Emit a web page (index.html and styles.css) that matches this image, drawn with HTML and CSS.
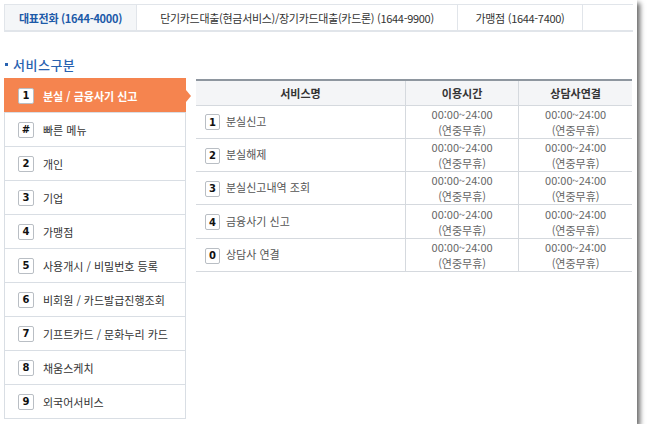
FILE: index.html
```html
<!DOCTYPE html>
<html lang="ko">
<head>
    <meta charset="UTF-8">
    <title>대표전화 서비스 안내</title>
    <link rel="stylesheet" href="styles.css">
</head>
<body>
<div class="window">
    <!-- Phone number tabs -->
    <ul class="tabs">
        <li class="tab tab-active">대표전화 (1644-4000)</li>
        <li class="tab">단기카드대출(현금서비스)/장기카드대출(카드론) (1644-9900)</li>
        <li class="tab">가맹점 (1644-7400)</li>
    </ul>

    <h2 class="section-title"><span class="dot"></span>서비스구분</h2>

    <div class="content">
        <ul class="menu">
            <li class="menu-item active"><span class="num">1</span>분실 / 금융사기 신고</li>
            <li class="menu-item"><span class="num">#</span>빠른 메뉴</li>
            <li class="menu-item"><span class="num">2</span>개인</li>
            <li class="menu-item"><span class="num">3</span>기업</li>
            <li class="menu-item"><span class="num">4</span>가맹점</li>
            <li class="menu-item"><span class="num">5</span>사용개시 / 비밀번호 등록</li>
            <li class="menu-item"><span class="num">6</span>비회원 / 카드발급진행조회</li>
            <li class="menu-item"><span class="num">7</span>기프트카드 / 문화누리 카드</li>
            <li class="menu-item"><span class="num">8</span>채움스케치</li>
            <li class="menu-item"><span class="num">9</span>외국어서비스</li>
        </ul>

        <table class="service-table">
            <thead>
            <tr>
                <th class="col-name">서비스명</th>
                <th>이용시간</th>
                <th>상담사연결</th>
            </tr>
            </thead>
            <tbody>
            <tr>
                <td class="name"><span class="num">1</span>분실신고</td>
                <td class="time">00:00~24:00<br>(연중무휴)</td>
                <td class="time">00:00~24:00<br>(연중무휴)</td>
            </tr>
            <tr>
                <td class="name"><span class="num">2</span>분실해제</td>
                <td class="time">00:00~24:00<br>(연중무휴)</td>
                <td class="time">00:00~24:00<br>(연중무휴)</td>
            </tr>
            <tr>
                <td class="name"><span class="num">3</span>분실신고내역 조회</td>
                <td class="time">00:00~24:00<br>(연중무휴)</td>
                <td class="time">00:00~24:00<br>(연중무휴)</td>
            </tr>
            <tr>
                <td class="name"><span class="num">4</span>금융사기 신고</td>
                <td class="time">00:00~24:00<br>(연중무휴)</td>
                <td class="time">00:00~24:00<br>(연중무휴)</td>
            </tr>
            <tr>
                <td class="name"><span class="num">0</span>상담사 연결</td>
                <td class="time">00:00~24:00<br>(연중무휴)</td>
                <td class="time">00:00~24:00<br>(연중무휴)</td>
            </tr>
            </tbody>
        </table>
    </div>
</div>
</body>
</html>
```

FILE: styles.css
```css
* {
    box-sizing: border-box;
    margin: 0;
    padding: 0;
}

body {
    background-color: #ffffff;
    font-family: "Noto Sans CJK KR", "Noto Sans", sans-serif;
    font-size: 11px;
    color: #333;
}

ul {
    list-style: none;
}

.window {
    width: 637px;
    height: 424px;
    background-color: #fff;
    padding: 4px 4px 0 4px;
    box-shadow: 3px 3px 5px rgba(0, 0, 0, 0.6);
}

/* Tabs */
.tabs {
    display: flex;
    height: 28px;
    border-top: 1px solid #e1e5ea;
    border-bottom: 2px solid #e1e5ea;
}

.tab {
    display: flex;
    align-items: center;
    justify-content: center;
    border-right: 1px solid #e1e5ea;
    font-size: 11px;
    letter-spacing: -0.3px;
    color: #333;
}

.tab:nth-child(1) {
    width: 133px;
    border-left: 1px solid #e1e5ea;
}

.tab:nth-child(2) {
    width: 321px;
}

.tab:nth-child(3) {
    width: 125px;
}

.tab-active {
    background-color: #f4f6f8;
    color: #1c5aa8;
    font-weight: bold;
}

/* Section heading */
.section-title {
    display: flex;
    align-items: center;
    margin-top: 23px;
    height: 18px;
    font-size: 13px;
    font-weight: 500;
    color: #2862b0;
    letter-spacing: 0.5px;
}

.dot {
    width: 3px;
    height: 3px;
    background-color: #2862b0;
    margin: 0 5px 0 1px;
}

.content {
    display: flex;
    gap: 10px;
    margin-top: 5px;
}

/* Left menu */
.menu {
    width: 182px;
    border: 1px solid #d9dee4;
    border-top: none;
    flex-shrink: 0;
}

.menu-item {
    position: relative;
    display: flex;
    align-items: center;
    height: 34px;
    padding-left: 13px;
    border-top: 1px solid #d9dee4;
    font-size: 11px;
    color: #333;
}

.menu-item .num {
    margin-right: 9px;
}

.menu-item.active {
    background-color: #f5844f;
    border-top-color: #f5844f;
    color: #fff;
    font-weight: bold;
    margin: 0 -1px;
    padding-left: 14px;
}

.menu-item.active::after {
    content: "";
    position: absolute;
    right: -5px;
    top: 11px;
    border-left: 5px solid #f5844f;
    border-top: 6px solid transparent;
    border-bottom: 6px solid transparent;
}

.menu-item.active .num {
    color: #111;
}

.num {
    display: inline-flex;
    align-items: center;
    justify-content: center;
    width: 16px;
    height: 16px;
    background-color: #fff;
    border: 1px solid #b9bec4;
    border-radius: 2px;
    font-family: "DejaVu Sans", sans-serif;
    font-size: 10px;
    font-weight: bold;
    color: #111;
    flex-shrink: 0;
}

/* Service table */
.service-table {
    flex: 1;
    margin-top: 1px;
    margin-right: 1px;
    height: 193px;
    border-collapse: collapse;
    border-top: 2px solid #8e969f;
    border-bottom: 1px solid #9aa1a8;
}

.service-table th {
    height: 25px;
    background-color: #f4f5f7;
    font-weight: bold;
    font-size: 11px;
    color: #333;
    border-bottom: 1px solid #d5d9de;
    border-left: 1px solid #d5d9de;
}

.service-table th:first-child,
.service-table td:first-child {
    border-left: none;
}

.service-table th.col-name {
    width: 209px;
}

.service-table td {
    height: 33px;
    border-bottom: 1px solid #d5d9de;
    border-left: 1px solid #d5d9de;
    color: #555;
    font-size: 11px;
}

.service-table td.name {
    padding-left: 9px;
}

.service-table td.name .num {
    margin-right: 6px;
    width: 15px;
    height: 16px;
}

.service-table td.time {
    text-align: center;
    line-height: 16px;
    color: #666;
    width: 113px;
}
```
